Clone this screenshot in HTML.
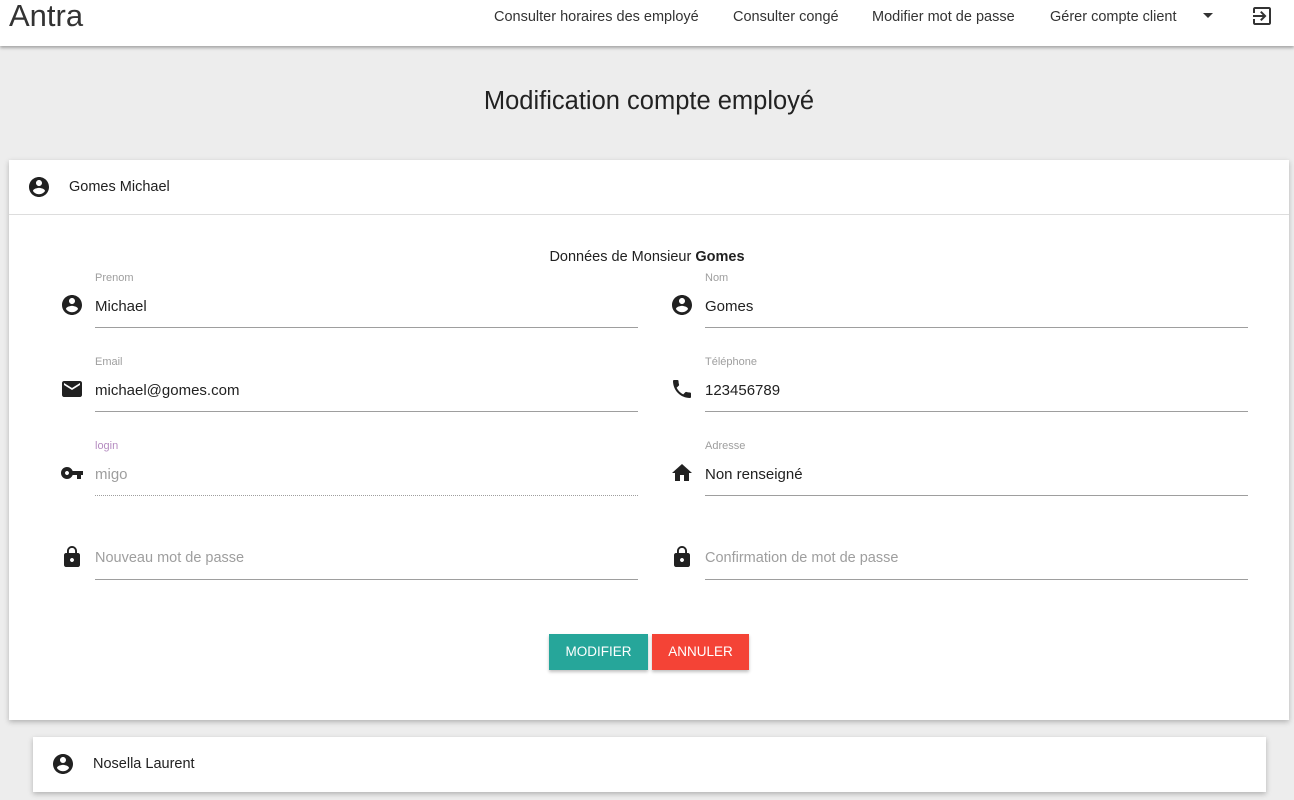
<!DOCTYPE html><html><head><meta charset="utf-8"><style>
*{box-sizing:border-box;margin:0;padding:0}
body{width:1294px;height:800px;overflow:hidden;background:#ededed;font-family:"Liberation Sans",sans-serif;color:#212121;position:relative}
.hdr{position:absolute;left:0;top:0;width:1294px;height:46px;background:#fff;box-shadow:0 2px 3px rgba(0,0,0,.3)}
.logo{position:absolute;left:9px;top:-2px;font-size:31px;color:#333}
.nav{position:absolute;top:8px;font-size:14.5px;color:#333}
.abs{position:absolute}
svg{position:absolute;width:24px;height:24px;fill:#212121}
.card{position:absolute;background:#fff;box-shadow:0 2px 5px rgba(0,0,0,.25)}
.lbl{position:absolute;font-size:11px;color:#9e9e9e}
.val{position:absolute;font-size:15px;color:#212121}
.ln{position:absolute;height:1px;background:#9e9e9e;width:543px}
.btn{position:absolute;top:634px;height:36px;color:#fff;font-size:13.5px;text-align:center;line-height:36px;box-shadow:0 2px 3px rgba(0,0,0,.25)}
</style></head><body>
<div class="hdr">
<div class="logo">Antra</div>
<div class="nav" style="left:494px;top:9px">Consulter horaires des employé</div>
<div class="nav" style="left:733px;top:9px">Consulter congé</div>
<div class="nav" style="left:872px;top:9px">Modifier mot de passe</div>
<div class="nav" style="left:1050px;top:9px">Gérer compte client</div>
<div class="abs" style="left:1203px;top:13px;border-left:5px solid transparent;border-right:5px solid transparent;border-top:5px solid #333"></div>
<svg style="left:1250px;top:4px;width:24px;height:24px;fill:#333" viewBox="0 0 24 24"><path d="M10.09 15.59L11.5 17l5-5-5-5-1.41 1.41L12.67 11H3v2h9.67l-2.58 2.59zM19 3H5c-1.11 0-2 .9-2 2v4h2V5h14v14H5v-4H3v4c0 1.1.89 2 2 2h14c1.1 0 2-.9 2-2V5c0-1.1-.9-2-2-2z"/></svg>
</div>
<div class="abs" style="left:0;width:1298px;top:87px;text-align:center;font-size:25.5px;color:#222">Modification compte employé</div>
<div class="card" style="left:9px;top:160px;width:1280px;height:560px">
<div class="abs" style="left:0;top:54px;width:1280px;height:1px;background:#ddd"></div>
<div class="abs" style="left:60px;top:19px;font-size:14.5px">Gomes Michael</div>
<div class="abs" style="left:0;width:1276px;top:89px;text-align:center;font-size:14.5px">Données de Monsieur <b>Gomes</b></div>
</div>
<svg style="left:27px;top:175px" viewBox="0 0 24 24"><path d="M12 2C6.48 2 2 6.48 2 12s4.48 10 10 10 10-4.48 10-10S17.52 2 12 2zm0 3c1.66 0 3 1.34 3 3s-1.34 3-3 3-3-1.34-3-3 1.34-3 3-3zm0 14.2c-2.5 0-4.71-1.28-6-3.22.03-1.99 4-3.08 6-3.08 1.99 0 5.970 1.09 6 3.08-1.29 1.94-3.5 3.22-6 3.22z"/></svg>

<div class="lbl" style="left:95px;top:272px">Prenom</div>
<svg style="left:60px;top:293px" viewBox="0 0 24 24"><path d="M12 2C6.48 2 2 6.48 2 12s4.48 10 10 10 10-4.48 10-10S17.52 2 12 2zm0 3c1.66 0 3 1.34 3 3s-1.34 3-3 3-3-1.34-3-3 1.34-3 3-3zm0 14.2c-2.5 0-4.71-1.28-6-3.22.03-1.99 4-3.08 6-3.08 1.99 0 5.97 1.09 6 3.08-1.29 1.94-3.5 3.22-6 3.22z"/></svg>
<div class="val" style="left:95px;top:298px">Michael</div><div class="ln" style="left:95px;top:327px"></div>
<div class="lbl" style="left:705px;top:272px">Nom</div>
<svg style="left:670px;top:293px" viewBox="0 0 24 24"><path d="M12 2C6.48 2 2 6.48 2 12s4.48 10 10 10 10-4.48 10-10S17.52 2 12 2zm0 3c1.66 0 3 1.34 3 3s-1.34 3-3 3-3-1.34-3-3 1.34-3 3-3zm0 14.2c-2.5 0-4.71-1.28-6-3.22.03-1.99 4-3.08 6-3.08 1.99 0 5.97 1.09 6 3.08-1.29 1.94-3.5 3.22-6 3.22z"/></svg>
<div class="val" style="left:705px;top:298px">Gomes</div><div class="ln" style="left:705px;top:327px"></div>

<div class="lbl" style="left:95px;top:356px">Email</div>
<svg style="left:60px;top:377px" viewBox="0 0 24 24"><path d="M20 4H4c-1.1 0-1.99.9-1.99 2L2 18c0 1.1.9 2 2 2h16c1.1 0 2-.9 2-2V6c0-1.1-.9-2-2-2zm0 4l-8 5-8-5V6l8 5 8-5v2z"/></svg>
<div class="val" style="left:95px;top:382px">michael@gomes.com</div><div class="ln" style="left:95px;top:411px"></div>
<div class="lbl" style="left:705px;top:356px">Téléphone</div>
<svg style="left:670px;top:377px" viewBox="0 0 24 24"><path d="M6.62 10.79c1.44 2.83 3.76 5.14 6.59 6.59l2.2-2.2c.27-.27.67-.36 1.02-.24 1.12.37 2.33.57 3.57.57.55 0 1 .45 1 1V20c0 .55-.45 1-1 1-9.39 0-17-7.61-17-17 0-.55.45-1 1-1h3.5c.55 0 1 .45 1 1 0 1.25.2 2.45.57 3.57.11.35.03.74-.25 1.02l-2.2 2.2z"/></svg>
<div class="val" style="left:705px;top:382px">123456789</div><div class="ln" style="left:705px;top:411px"></div>

<div class="lbl" style="left:95px;top:440px;color:#b58cc0">login</div>
<svg style="left:60px;top:461px" viewBox="0 0 24 24"><path d="M12.65 10C11.83 7.67 9.61 6 7 6c-3.31 0-6 2.69-6 6s2.69 6 6 6c2.61 0 4.83-1.67 5.65-4H17v4h4v-4h2v-4H12.65zM7 14c-1.1 0-2-.9-2-2s.9-2 2-2 2 .9 2 2-.9 2-2 2z"/></svg>
<div class="val" style="left:95px;top:466px;color:#9e9e9e">migo</div><div class="ln" style="left:95px;top:495px;background:none;border-top:1px dotted #9e9e9e"></div>
<div class="lbl" style="left:705px;top:440px">Adresse</div>
<svg style="left:670px;top:461px" viewBox="0 0 24 24"><path d="M10 20v-6h4v6h5v-8h3L12 3 2 12h3v8z"/></svg>
<div class="val" style="left:705px;top:466px">Non renseigné</div><div class="ln" style="left:705px;top:495px"></div>

<svg style="left:60px;top:545px" viewBox="0 0 24 24"><path d="M18 8h-1V6c0-2.76-2.24-5-5-5S7 3.24 7 6v2H6c-1.1 0-2 .9-2 2v10c0 1.1.9 2 2 2h12c1.1 0 2-.9 2-2V10c0-1.1-.9-2-2-2zm-6 9c-1.1 0-2-.9-2-2s.9-2 2-2 2 .9 2 2-.9 2-2 2zm3.1-9H8.9V6c0-1.71 1.39-3.1 3.1-3.1 1.71 0 3.1 1.39 3.1 3.1v2z"/></svg>
<div class="val" style="left:95px;top:550px;font-size:14.5px;color:#9e9e9e">Nouveau mot de passe</div><div class="ln" style="left:95px;top:579px"></div>
<svg style="left:670px;top:545px" viewBox="0 0 24 24"><path d="M18 8h-1V6c0-2.76-2.24-5-5-5S7 3.24 7 6v2H6c-1.1 0-2 .9-2 2v10c0 1.1.9 2 2 2h12c1.1 0 2-.9 2-2V10c0-1.1-.9-2-2-2zm-6 9c-1.1 0-2-.9-2-2s.9-2 2-2 2 .9 2 2-.9 2-2 2zm3.1-9H8.9V6c0-1.71 1.39-3.1 3.1-3.1 1.71 0 3.1 1.39 3.1 3.1v2z"/></svg>
<div class="val" style="left:705px;top:550px;font-size:14.5px;color:#9e9e9e">Confirmation de mot de passe</div><div class="ln" style="left:705px;top:579px"></div>

<div class="btn" style="left:549px;width:99px;background:#26a69a">MODIFIER</div>
<div class="btn" style="left:652px;width:97px;background:#f44336">ANNULER</div>

<div class="card" style="left:33px;top:737px;width:1233px;height:55px">
<div class="abs" style="left:60px;top:19px;font-size:14.5px">Nosella Laurent</div>
</div>
<svg style="left:51px;top:752px" viewBox="0 0 24 24"><path d="M12 2C6.48 2 2 6.48 2 12s4.48 10 10 10 10-4.48 10-10S17.52 2 12 2zm0 3c1.66 0 3 1.34 3 3s-1.34 3-3 3-3-1.34-3-3 1.34-3 3-3zm0 14.2c-2.5 0-4.71-1.28-6-3.22.03-1.99 4-3.08 6-3.08 1.99 0 5.97 1.09 6 3.08-1.29 1.94-3.5 3.22-6 3.22z"/></svg>
</body></html>
